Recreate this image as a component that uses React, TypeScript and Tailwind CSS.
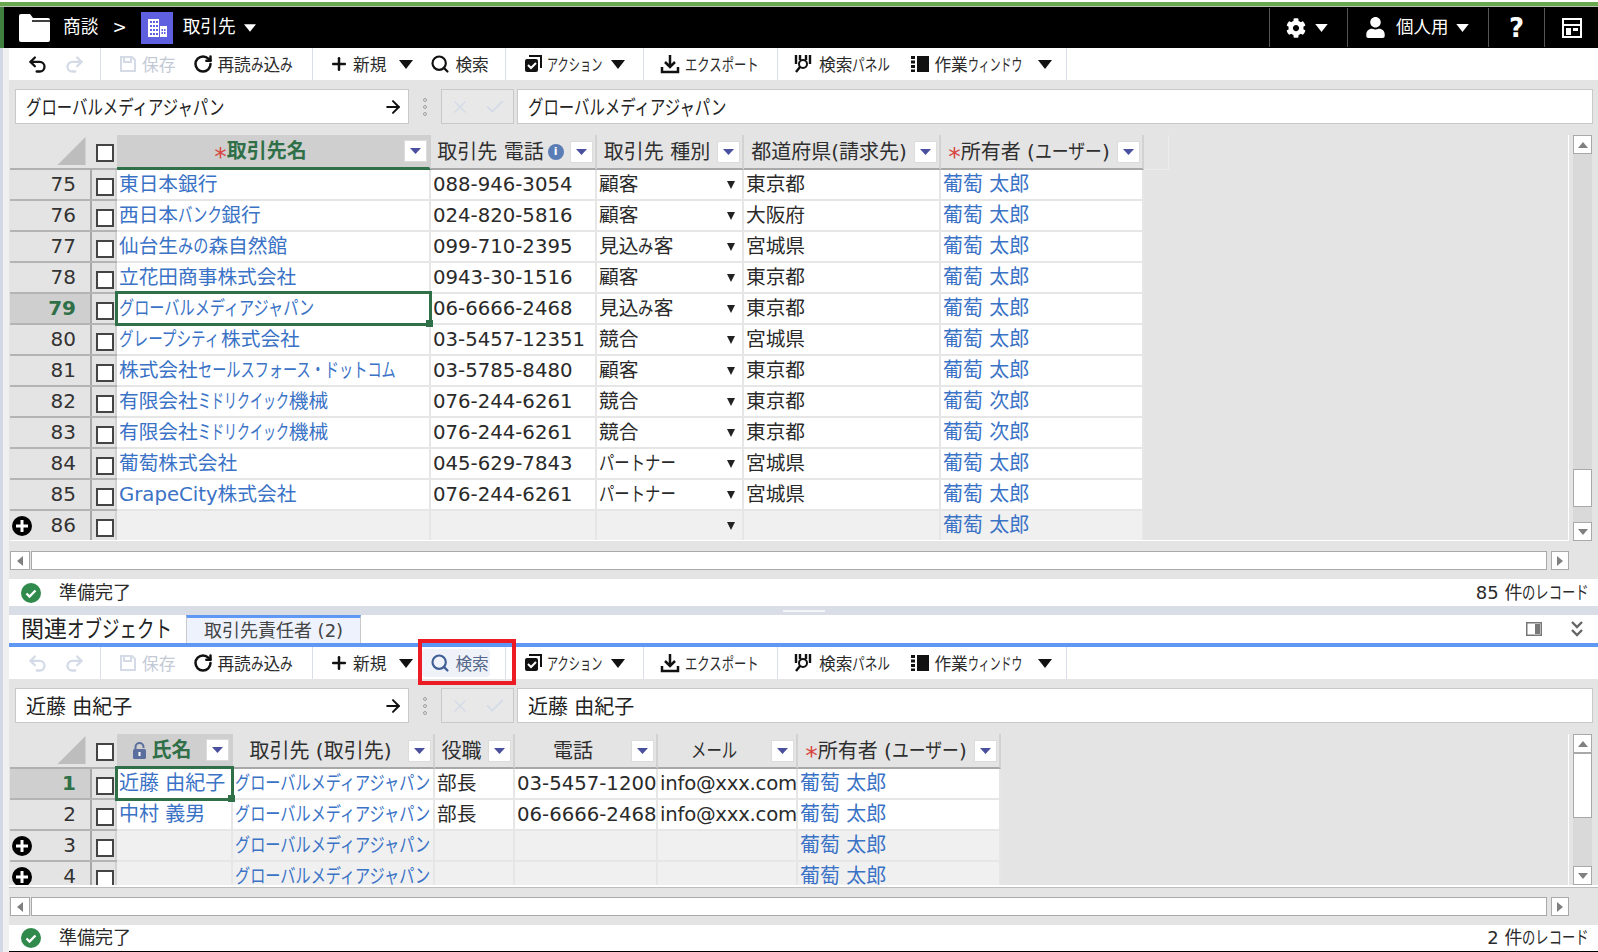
import React from "react";
import { Undo2, Redo2, RotateCw, Plus, Search, ArrowRight, X, Check } from "lucide-react";
import { FaCog, FaUser } from "react-icons/fa";

const KANA = /^[\u3040-\u309F\u30A0-\u30FF]+$/;

const T = ({ s, size = 19.7, k = 0.77 }: { s: string; size?: number; k?: number }) => {
  const parts = s.split(/([\u3040-\u309F\u30A0-\u30FF]+)/).filter(Boolean);
  return (
    <>
      {parts.map((p, i) =>
        KANA.test(p) ? (
          <span key={i} className="inline-block whitespace-nowrap" style={{ width: p.length * size * k }}>
            <span className="inline-block origin-left whitespace-nowrap" style={{ transform: `scaleX(${k})` }}>{p}</span>
          </span>
        ) : (
          <span key={i} className="whitespace-pre">{p}</span>
        )
      )}
    </>
  );
};

const Caret = ({ className = "" }: { className?: string }) => (
  <svg viewBox="0 0 14 9" className={`shrink-0 ${className}`}>
    <path d="M0 0h14L7 9z" fill="currentColor" />
  </svg>
);

const Tool = ({ label, gap = "ml-[6px]", off = false, k = 0.76 }: { label: string; gap?: string; off?: boolean; k?: number }) => (
  <span className={`${gap} pt-[2px] text-[16.7px] leading-none whitespace-nowrap ${off ? "text-[#c3cad6]" : "text-[#2b2b2b]"}`}>
    <T s={label} size={16.7} k={k} />
  </span>
);

const SaveIcon = () => (
  <svg viewBox="0 0 18 18" className="w-[18px] h-[18px] text-[#d5dbe6] shrink-0" fill="none" stroke="currentColor" strokeWidth="2">
    <path d="M2 2h11l3 3v11H2z" />
    <path d="M5 2v5h7V2" />
  </svg>
);
const ActionIcon = () => (
  <svg viewBox="0 0 18 18" className="w-[18px] h-[18px] shrink-0">
    <path d="M5 1h12v12" fill="none" stroke="#111" strokeWidth="2" />
    <rect x="1" y="4" width="13" height="13" rx="2" fill="#111" />
    <path d="M4 10l3 3 5-5" fill="none" stroke="#fff" strokeWidth="2" />
  </svg>
);
const ExportIcon = () => (
  <svg viewBox="0 0 20 20" className="w-[20px] h-[20px] shrink-0" fill="none" stroke="#111" strokeWidth="2.5">
    <path d="M10 1v12M5 8l5 5 5-5M2 13v5h16v-5" />
  </svg>
);
const PanelIcon = () => (
  <svg viewBox="0 0 18 18" className="w-[18px] h-[18px] shrink-0" fill="none" stroke="#111">
    <path d="M2 0v9M6 0v5M12 0v5M16 0v9" strokeWidth="2.4" />
    <circle cx="9" cy="9" r="4" strokeWidth="2" />
    <path d="M6 12l-4 5" strokeWidth="2.4" />
  </svg>
);
const WorkIcon = () => (
  <svg viewBox="0 0 18 18" className="w-[18px] h-[18px] shrink-0" fill="#111">
    <path d="M0 1h4v3H0zM0 5.5h4v3H0zM0 10h4v3H0zM0 14.5h4V17H0zM6 1h12v16H6z" />
  </svg>
);

const Sep = ({ w, children }: { w: string; children?: React.ReactNode }) => (
  <div className={`${w} h-full flex items-center shrink-0 border-r border-[#d9deea]`}>{children}</div>
);

const Toolbar = ({ second = false }: { second?: boolean }) => (
  <div className="h-[32px] shrink-0 bg-white flex items-center">
    <Sep w="w-[92px] pl-[18px]">
      <Undo2 size={21} strokeWidth={2.6} className={second ? "text-[#d5dbe6]" : "text-[#111]"} />
      <Redo2 size={21} strokeWidth={2.6} className="text-[#d5dbe6] ml-[16px]" />
    </Sep>
    <Sep w="w-[212px] pl-[18px]">
      <SaveIcon />
      <Tool label="保存" off gap="ml-[5px]" />
      <RotateCw size={20} strokeWidth={3} className="ml-[18px] text-[#111] shrink-0" />
      <Tool label="再読み込み" gap="ml-[4px]" />
    </Sep>
    <Sep w="w-[193px] pl-[16px]">
      <Plus size={20} strokeWidth={3} className="text-[#111] shrink-0" />
      <Tool label="新規" gap="ml-[4px]" />
      <Caret className="w-[14px] h-[9px] ml-[13px] text-[#111]" />
      <div className={`ml-[9px] h-[28px] w-[68px] pl-[8px] flex items-center rounded ${second ? "bg-[#eff2f9]" : ""}`}>
        <Search size={20} strokeWidth={2.6} className={`shrink-0 ${second ? "text-[#3f5f96]" : "text-[#111]"}`} />
        <Tool label="検索" gap={second ? "ml-[5px] !text-[#56688c]" : "ml-[5px]"} />
      </div>
    </Sep>
    <Sep w="w-[138px] pl-[18px]">
      <ActionIcon />
      <Tool label="アクション" k={0.67} gap="ml-[5px]" />
      <Caret className="w-[14px] h-[9px] ml-[8px] text-[#111]" />
    </Sep>
    <Sep w="w-[134px] pl-[16px]">
      <ExportIcon />
      <Tool label="エクスポート" gap="ml-[5px]" k={0.74} />
    </Sep>
    <Sep w="w-[289px] pl-[16px]">
      <PanelIcon />
      <Tool label="検索パネル" gap="ml-[7px]" />
      <span className="ml-[21px] flex"><WorkIcon /></span>
      <Tool label="作業ウィンドウ" gap="ml-[5px]" k={0.65} />
      <Caret className="w-[14px] h-[9px] ml-[16px] text-[#111]" />
    </Sep>
  </div>
);

const NameBar = ({ name }: { name: string }) => (
  <div className="h-[55px] shrink-0 bg-[#e4e4e4] pt-[9px] pl-[6px] flex items-start text-[20px] text-[#222]">
    <div className="w-[394px] h-[35px] bg-white border border-[#c9c9c9] flex items-center justify-between pl-[10px] pr-[5px] leading-none">
      <span className="whitespace-nowrap translate-y-[1px]"><T s={name} size={20} /></span>
      <ArrowRight size={20} strokeWidth={2.4} className="text-[#111]" />
    </div>
    <div className="w-[32px] h-[35px] flex flex-col items-center justify-center gap-[3px]">
      <span className="w-[4px] h-[4px] rounded-full border border-[#a0a0a0]" />
      <span className="w-[4px] h-[4px] rounded-full border border-[#a0a0a0]" />
      <span className="w-[4px] h-[4px] rounded-full border border-[#a0a0a0]" />
    </div>
    <div className="w-[73px] h-[35px] border border-[#c9c9c9] bg-[#e8e8e8] flex items-center justify-center gap-[14px] text-[#d5dce8]">
      <X size={20} strokeWidth={2} />
      <Check size={22} strokeWidth={2} />
    </div>
    <div className="ml-[3px] w-[1076px] h-[35px] bg-white border border-[#c9c9c9] flex items-center pl-[10px] leading-none">
      <span className="whitespace-nowrap translate-y-[1px]"><T s={name} size={20} /></span>
    </div>
  </div>
);

const Filter = () => (
  <span className="shrink-0 w-[23px] h-[22px] bg-white border border-[#dcdcdc] flex items-center justify-center">
    <svg viewBox="0 0 11 6" className="w-[11px] h-[6px]"><path d="M0 0h11L5.500 6z" fill="#4a4f9e" /></svg>
  </span>
);
const Star = () => <span className="text-[#d8453f] text-[25px] leading-none translate-y-[5px] inline-block font-normal">*</span>;
const InfoDot = () => (
  <span className="ml-[4px] w-[16px] h-[16px] rounded-full bg-[#5b7db5] text-white text-[11px] font-bold flex items-center justify-center shrink-0 leading-none">i</span>
);
const LockIcon = () => (
  <svg viewBox="0 0 15 17" className="w-[15px] h-[17px] mr-[5px] shrink-0">
    <path d="M3.500 8V5a4 4 0 018 0v1" fill="none" stroke="#5b6f9e" strokeWidth="2" />
    <rect x="1" y="7" width="13" height="10" rx="1.500" fill="#5b6f9e" />
    <rect x="6.500" y="10" width="2" height="4" fill="#fff" />
  </svg>
);
const PlusDot = () => (
  <svg viewBox="0 0 20 20" className="w-[20px] h-[20px] absolute left-[2px] top-[5px]">
    <circle cx="10" cy="10" r="10" fill="#000" />
    <path d="M10 4v12M4 10h12" stroke="#fff" strokeWidth="3" />
  </svg>
);
const Box = () => <span className="block w-[18px] h-[18px] bg-white border-2 border-[#444]" />;

type Col = { w: string; head: React.ReactNode; active?: boolean };

const HeadCell = ({ c }: { c: Col }) => (
  <div className={`${c.w} h-[35px] shrink-0 flex items-center pr-[2px] border-r-2 ${c.active ? "bg-[#cfcfcf] border-[#cfcfcf] border-b-[3px] border-b-[#2f7048]" : "bg-[#e4e4e4] border-[#d2d2d2] border-b-2 border-b-[#a8a8a8]"} text-[20px] leading-none text-[#2f2f2f]`}>
    <div className={`flex-1 flex items-center justify-center whitespace-pre min-w-0 ${c.active ? "font-bold text-[#2f7048]" : ""}`}>{c.head}</div>
    <Filter />
  </div>
);

const Corner = () => (
  <div className="w-[107px] h-[35px] shrink-0 flex bg-[#e4e4e4] border-b-2 border-[#b0b0b0]">
    <div className="w-[80px] flex items-end justify-end pr-[4px] pb-[3px]">
      <svg viewBox="0 0 29 29" className="w-[29px] h-[28px]"><path d="M29 0v29H0z" fill="#bdbdbd" /></svg>
    </div>
    <div className="w-[27px] pl-[6px] pt-[9px]"><Box /></div>
  </div>
);

const RowHead = ({ n, sel, add }: { n: string; sel?: boolean; add?: boolean }) => (
  <div className="w-[107px] h-[31px] shrink-0 flex relative bg-[#e4e4e4] border-b-2 border-[#b4b4b4] text-[20px] leading-none">
    {add && <PlusDot />}
    <div className={`w-[80px] pr-[14px] flex items-center justify-end pb-[1px] ${sel ? "bg-[#cfcfcf] font-bold text-[#2f7048]" : "text-[#333]"}`}>{n}</div>
    <div className="w-[27px] border-l-2 border-[#a8a8a8] pl-[4px] pt-[8px] border-r-2 border-r-[#d2d2d2]"><Box /></div>
  </div>
);

const Link = ({ s, k }: { s: string; k?: number }) => <span className="text-[#3a72c6]"><T s={s} k={k} /></span>;

const Cell = ({ w, children, add, sel, drop }: { w: string; children?: React.ReactNode; add?: boolean; sel?: boolean; drop?: boolean }) => (
  <div className={`${w} h-[31px] shrink-0 relative flex items-center justify-between whitespace-nowrap text-[19.7px] leading-none pl-[2px] border-r-2 border-b-2 border-[#e6e6e6] ${add ? "bg-[#f0f0f0]" : "bg-white"} text-[#2a2a2a]`}>
    <span className="min-w-0">{children}</span>
    {drop && (
      <svg viewBox="0 0 8 8" className="w-[8px] h-[8px] mr-[7px] shrink-0"><path d="M0 0h8L4 8z" fill="#222" /></svg>
    )}
    {sel && (
      <>
        <span className="absolute -left-[2px] -top-[3px] right-[-3px] bottom-[-3px] border-[3px] border-[#2f7048] z-10" />
        <span className="absolute right-[-4px] bottom-[-4px] w-[7px] h-[7px] bg-[#2f7048] z-10" />
      </>
    )}
  </div>
);

const VBar = ({ thumb, tall, thumbH }: { thumb: string; tall: string; thumbH: string }) => (
  <div className={`w-[19px] ml-[4px] ${tall} shrink-0 flex flex-col bg-[#d9d9d9]`}>
    <div className="h-[19px] shrink-0 bg-white border border-[#a9a9a9] flex items-center justify-center">
      <svg viewBox="0 0 10 6" className="w-[10px] h-[6px]"><path d="M0 6h10L5 0z" fill="#808080" /></svg>
    </div>
    <div className={`flex-1 flex flex-col ${thumb}`}>
      <div className={`${thumbH} bg-white border border-[#a9a9a9]`} />
    </div>
    <div className="h-[19px] shrink-0 bg-white border border-[#a9a9a9] flex items-center justify-center">
      <svg viewBox="0 0 10 6" className="w-[10px] h-[6px]"><path d="M0 0h10L5 6z" fill="#808080" /></svg>
    </div>
  </div>
);

const HBar = ({ pad }: { pad: string }) => (
  <div className={`${pad} shrink-0 bg-[#e4e4e4] pl-[1px]`}>
    <div className="flex h-[19px]">
      <div className="w-[20px] bg-white border border-[#a9a9a9] flex items-center justify-center">
        <svg viewBox="0 0 6 10" className="w-[6px] h-[10px]"><path d="M6 0v10L0 5z" fill="#808080" /></svg>
      </div>
      <div className="ml-[1px] w-[1516px] bg-white border border-[#a9a9a9]" />
      <div className="ml-[4px] w-[18px] bg-white border border-[#a9a9a9] flex items-center justify-center">
        <svg viewBox="0 0 6 10" className="w-[6px] h-[10px]"><path d="M0 0v10l6-5z" fill="#808080" /></svg>
      </div>
    </div>
  </div>
);

const Status = ({ h, right }: { h: string; right: string }) => (
  <div className={`${h} shrink-0 bg-white pl-[12px] pr-[9px] flex items-center justify-between text-[18px] leading-none text-[#2b2b2b]`}>
    <div className="flex items-center">
      <svg viewBox="0 0 20 20" className="w-[20px] h-[20px]">
        <circle cx="10" cy="10" r="10" fill="#2f8a4b" />
        <path d="M5.500 10.500l3 3 6-6" fill="none" stroke="#fff" strokeWidth="2.400" />
      </svg>
      <span className="ml-[18px]">準備完了</span>
    </div>
    <span className="whitespace-pre"><T s={right} size={18} k={0.74} /></span>
  </div>
);

const rows1: [string, string, string, string, string, string, number?][] = [
  ["75", "東日本銀行", "088-946-3054", "顧客", "東京都", "葡萄 太郎"],
  ["76", "西日本バンク銀行", "024-820-5816", "顧客", "大阪府", "葡萄 太郎", 0.73],
  ["77", "仙台生みの森自然館", "099-710-2395", "見込み客", "宮城県", "葡萄 太郎"],
  ["78", "立花田商事株式会社", "0943-30-1516", "顧客", "東京都", "葡萄 太郎"],
  ["79", "グローバルメディアジャパン", "06-6666-2468", "見込み客", "東京都", "葡萄 太郎"],
  ["80", "グレープシティ株式会社", "03-5457-12351", "競合", "宮城県", "葡萄 太郎", 0.74],
  ["81", "株式会社セールスフォース・ドットコム", "03-5785-8480", "顧客", "東京都", "葡萄 太郎", 0.72],
  ["82", "有限会社ミドリクイック機械", "076-244-6261", "競合", "東京都", "葡萄 次郎", 0.66],
  ["83", "有限会社ミドリクイック機械", "076-244-6261", "競合", "東京都", "葡萄 次郎", 0.66],
  ["84", "葡萄株式会社", "045-629-7843", "パートナー", "宮城県", "葡萄 太郎"],
  ["85", "GrapeCity株式会社", "076-244-6261", "パートナー", "宮城県", "葡萄 太郎"],
  ["86", "", "", "", "", "葡萄 太郎"],
];

const cols1: Col[] = [
  { w: "w-[314px]", active: true, head: <><Star />取引先名</> },
  { w: "w-[166px]", head: <>取引先 電話<InfoDot /></> },
  { w: "w-[147px]", head: <>取引先 種別</> },
  { w: "w-[197px]", head: <>都道府県(請求先)</> },
  { w: "w-[203px]", head: <><Star />所有者 (<T s="ユーザー" size={20} k={0.84} />)</> },
];

const cols2: Col[] = [
  { w: "w-[116px]", active: true, head: <><LockIcon />氏名</> },
  { w: "w-[202px]", head: <>取引先 (取引先)</> },
  { w: "w-[80px]", head: <>役職</> },
  { w: "w-[143px]", head: <>電話</> },
  { w: "w-[140px]", head: <><T s="メール" size={20} /></> },
  { w: "w-[203px]", head: <><Star />所有者 (<T s="ユーザー" size={20} k={0.84} />)</> },
];

const rows2: { n: string; name: string; role: string; tel: string; mail: string; add?: boolean; sel?: boolean }[] = [
  { n: "1", name: "近藤 由紀子", role: "部長", tel: "03-5457-1200", mail: "info@xxx.com", sel: true },
  { n: "2", name: "中村 義男", role: "部長", tel: "06-6666-2468", mail: "info@xxx.com" },
  { n: "3", name: "", role: "", tel: "", mail: "", add: true },
  { n: "4", name: "", role: "", tel: "", mail: "", add: true },
];

export default function App() {
  return (
    <div className="relative w-[1598px] h-[952px] overflow-hidden flex flex-col bg-white font-['DejaVu_Sans','Noto_Sans_CJK_JP',sans-serif]">
      <div className="h-[2px] shrink-0 bg-white" />
      <div className="h-[4px] shrink-0 bg-[#6aa84f]" />
      <div className="h-[1px] shrink-0 bg-[#b9c4b0]" />

      <div className="h-[41px] shrink-0 bg-black flex items-center border-l-4 border-[#3f7f3f] text-white">
        <svg viewBox="0 0 31 28" className="ml-[15px] w-[31px] h-[28px] shrink-0">
          <path d="M0 2a2 2 0 012-2h9l3 4h15a2 2 0 012 2v20a2 2 0 01-2 2H2a2 2 0 01-2-2z" fill="#fff" />
          <path d="M13 7h18" stroke="#000" strokeWidth="1.500" />
        </svg>
        <span className="ml-[13px] text-[17.7px] leading-none">商談</span>
        <span className="ml-[14px] text-[17px] leading-none">&gt;</span>
        <div className="ml-[14px] w-[32px] h-[32px] bg-[#5f60e0] flex items-center justify-center shrink-0">
          <svg viewBox="0 0 20 18" className="w-[20px] h-[18px]" fill="#fff">
            <path fillRule="evenodd" d="M1 0h11v18H1zM3 2v2h2V2zm3 0v2h2V2zm3 0v2h2V2zM3 6v2h2V6zm3 0v2h2V6zm3 0v2h2V6zM3 10v2h2v-2zm3 0v2h2v-2zm3 0v2h2v-2zM3 14v2h2v-2zm3 0v2h2v-2zm3 0v2h2v-2zM13 7h7v11h-7zm1.500 3v2h1.500v-2zm2.500 0v2h1.500v-2zm-2.500 3v2h1.500v-2zm2.500 0v2h1.500v-2z" />
          </svg>
        </div>
        <span className="ml-[10px] text-[17.7px] leading-none">取引先</span>
        <Caret className="ml-[8px] w-[12px] h-[8px]" />
        <div className="ml-auto flex h-full items-center">
          <div className="w-[78px] h-[39px] border-l border-[#555] pl-[16px] flex items-center">
            <FaCog className="w-[20px] h-[20px]" />
            <Caret className="ml-[9px] w-[13px] h-[8px]" />
          </div>
          <div className="w-[141px] h-[39px] border-l border-[#555] pl-[17px] flex items-center">
            <FaUser className="w-[21px] h-[21px]" />
            <span className="ml-[10px] text-[17.5px] leading-none">個人用</span>
            <Caret className="ml-[7px] w-[13px] h-[8px]" />
          </div>
          <div className="w-[56px] h-[39px] border-l border-[#555] flex items-center justify-center text-[26px] font-bold leading-none">?</div>
          <div className="w-[54px] h-[39px] border-l border-[#555] pl-[17px] flex items-center">
            <svg viewBox="0 0 20 20" className="w-[20px] h-[20px]" fill="none" stroke="#fff" strokeWidth="2">
              <rect x="1" y="1" width="18" height="18" />
              <path d="M1 7h18" />
              <path d="M4 10h5v7H4zM11 10h5v3h-5z" fill="#fff" stroke="none" />
            </svg>
          </div>
        </div>
      </div>

      <div className="flex-1 flex min-h-0">
        <div className="w-[3px] shrink-0 bg-[#d2d8e6]" />
        <div className="w-[6px] shrink-0 bg-[#f0f0f0]" />
        <div className="flex-1 flex flex-col min-w-0">
          <Toolbar />
          <NameBar name="グローバルメディアジャパン" />

          <div className="h-[406px] shrink-0 bg-[#e4e4e4] flex pl-[1px]">
            <div className="w-[1559px] h-full overflow-hidden border-r border-b border-white">
              <div className="flex">
                <Corner />
                {cols1.map((c, i) => <HeadCell key={i} c={c} />)}
                <div className="w-[25px] h-[35px] border-r border-b border-[#ececec]" />
              </div>
              {rows1.map((r, i) => {
                const add = r[0] === "86";
                return (
                  <div className="flex" key={i}>
                    <RowHead n={r[0]} sel={r[0] === "79"} add={add} />
                    <Cell w="w-[314px]" add={add} sel={r[0] === "79"}><Link s={r[1]} k={r[6]} /></Cell>
                    <Cell w="w-[166px]" add={add}>{r[2]}</Cell>
                    <Cell w="w-[147px]" add={add} drop><T s={r[3]} k={0.78} /></Cell>
                    <Cell w="w-[197px]" add={add}>{r[4]}</Cell>
                    <Cell w="w-[203px]" add={add}><span className="text-[20px]"><Link s={r[5]} /></span></Cell>
                  </div>
                );
              })}
            </div>
            <VBar tall="h-[406px]" thumb="justify-end pb-[15px]" thumbH="h-[38px]" />
          </div>
          <HBar pad="h-[38px] pt-[10px]" />
          <Status h="h-[27px]" right="85 件のレコード" />

          <div className="h-[9px] shrink-0 bg-[#d9dde6] flex items-center justify-center">
            <span className="w-[42px] h-[2px] bg-[#f4f5f8]" />
          </div>

          <div className="h-[28px] shrink-0 bg-white pl-[12px] flex items-end relative">
            <span className="w-[165px] text-[23px] leading-none pb-[2px] whitespace-nowrap text-[#222]"><T s="関連オブジェクト" size={23} k={0.76} /></span>
            <div className="w-[175px] h-[28px] bg-[#edf2fd] border-t-[3px] border-t-[#5f97f5] border-x border-x-[#c9c9c9] flex items-center justify-center text-[18px] leading-none text-[#444] whitespace-pre">取引先責任者 (2)</div>
            <div className="ml-auto flex items-center h-full pr-[15px] gap-[29px] text-[#777]">
              <svg viewBox="0 0 16 14" className="w-[16px] h-[14px]" fill="none" stroke="#777" strokeWidth="1.500">
                <rect x="0.750" y="0.750" width="14.500" height="12.500" />
                <rect x="9" y="2" width="5" height="10" fill="#777" stroke="none" />
              </svg>
              <svg viewBox="0 0 12 16" className="w-[12px] h-[16px]" fill="none" stroke="#666" strokeWidth="2.400">
                <path d="M1 1l5 5 5-5M1 9l5 5 5-5" />
              </svg>
            </div>
          </div>
          <div className="h-[4px] shrink-0 bg-[#5f97f5]" />
          <Toolbar second />
          <NameBar name="近藤 由紀子" />

          <div className="h-[151px] shrink-0 bg-[#e4e4e4] flex pl-[1px]">
            <div className="w-[1559px] h-full overflow-hidden border-r border-white">
              <div className="flex">
                <Corner />
                {cols2.map((c, i) => <HeadCell key={i} c={c} />)}
              </div>
              {rows2.map((r, i) => (
                <div className="flex" key={i}>
                  <RowHead n={r.n} sel={r.sel} add={r.add} />
                  <Cell w="w-[116px]" add={r.add} sel={r.sel}><span className="text-[20px]"><Link s={r.name} /></span></Cell>
                  <Cell w="w-[202px]" add={r.add}><Link s="グローバルメディアジャパン" /></Cell>
                  <Cell w="w-[80px]" add={r.add}>{r.role}</Cell>
                  <Cell w="w-[143px]" add={r.add}>{r.tel}</Cell>
                  <Cell w="w-[140px]" add={r.add}><span className="tracking-[-0.25px]">{r.mail}</span></Cell>
                  <Cell w="w-[203px]" add={r.add}><span className="text-[20px]"><Link s="葡萄 太郎" /></span></Cell>
                </div>
              ))}
            </div>
            <VBar tall="h-[151px]" thumb="justify-start" thumbH="h-[65px]" />
          </div>
          <div className="h-[2px] shrink-0 bg-white" />
          <HBar pad="h-[38px] pt-[9px] border-t border-[#bdbdbd]" />
          <Status h="h-[26px]" right="2 件のレコード" />
          <div className="h-[1px] shrink-0 bg-black" />
        </div>
      </div>

      <div className="absolute left-[418px] top-[639px] w-[98px] h-[46px] border-4 border-[#ed1c24] pointer-events-none" />
    </div>
  );
}
